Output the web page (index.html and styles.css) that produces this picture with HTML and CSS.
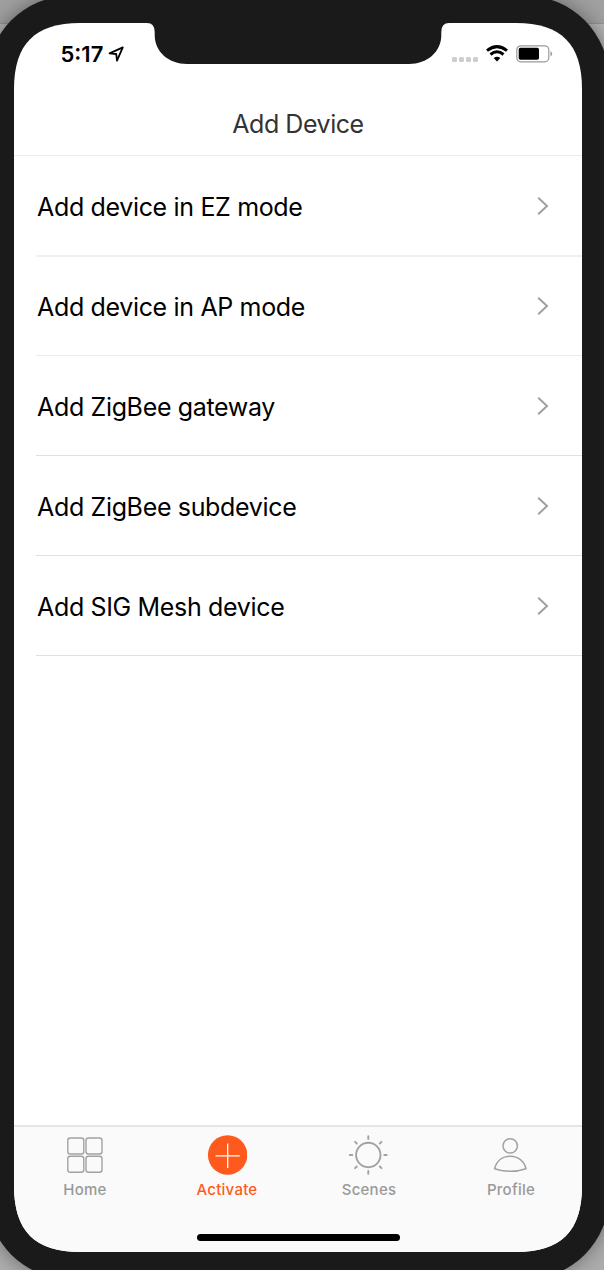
FILE: index.html
```html
<!DOCTYPE html>
<html lang="en">
<head>
<meta charset="utf-8">
<title>Add Device</title>
<link rel="stylesheet" href="styles.css">
</head>
<body>
<div class="desktop">
  <div class="device"></div>
  <main class="screen">
    <div class="status">
      <div class="clock"><span>5:17</span>
        <svg width="17" height="16" viewBox="0 0 17 16"><path d="M1.6 7.4 14.8 1.4 9 14.6 8.2 8Z" fill="none" stroke="#000" stroke-width="1.8" stroke-linejoin="round"/></svg>
      </div>
      <div class="indicators">
        <span class="signal"><i></i><i></i><i></i><i></i></span>
        <svg class="wifi" width="22" height="17" viewBox="0 0 22 17"><g fill="none" stroke="#000" stroke-width="3"><path d="M1 5.6Q11-2.3 21 5.6"/><path d="M4.5 9.5Q11 4.1 17.5 9.5"/></g><path d="M7.7 13Q11 10.3 14.3 13L11 16.5Z"/></svg>
        <svg class="battery" width="37" height="18" viewBox="0 0 37 18"><rect x=".8" y=".8" width="32" height="16" rx="4" fill="#fff" stroke="#999" stroke-width="1.2"/><rect x="2.7" y="2.8" width="20.3" height="12" rx="1.8"/><path d="M34.5 6Q38 8.8 34.5 11.6Z" fill="#999"/></svg>
      </div>
    </div>
    <header class="title">Add Device</header>
    <ul class="list">
      <li class="soft"><span>Add device in EZ mode</span><svg class="chevron" viewBox="0 0 12 20"><path d="M1.2 1.8 10 10 1.2 18.2"/></svg></li>
      <li class="faint"><span>Add device in AP mode</span><svg class="chevron" viewBox="0 0 12 20"><path d="M1.2 1.8 10 10 1.2 18.2"/></svg></li>
      <li><span>Add ZigBee gateway</span><svg class="chevron" viewBox="0 0 12 20"><path d="M1.2 1.8 10 10 1.2 18.2"/></svg></li>
      <li><span>Add ZigBee subdevice</span><svg class="chevron" viewBox="0 0 12 20"><path d="M1.2 1.8 10 10 1.2 18.2"/></svg></li>
      <li><span>Add SIG Mesh device</span><svg class="chevron" viewBox="0 0 12 20"><path d="M1.2 1.8 10 10 1.2 18.2"/></svg></li>
    </ul>
    <footer class="dock">
      <nav class="tabs">
        <a class="tab"><svg viewBox="0 0 40 40"><g fill="none" stroke="#a2a2a2" stroke-width="1.4"><rect x="2.8" y="3" width="16" height="16" rx="2.5"/><rect x="21" y="3" width="16" height="16" rx="2.5"/><rect x="2.8" y="21.2" width="16" height="16" rx="2.5"/><rect x="21" y="21.2" width="16" height="16" rx="2.5"/></g></svg><span>Home</span></a>
        <a class="tab active"><svg viewBox="0 0 40 40"><circle cx="20.6" cy="20" r="19.7" fill="#ff5a1e"/><path d="M8.6 20.8H32.8M20.7 8.5V33" stroke="#fff" stroke-width="1.3"/></svg><span>Activate</span></a>
        <a class="tab"><svg viewBox="0 0 40 40"><g fill="none" stroke="#a2a2a2" stroke-width="1.9" stroke-linecap="round"><circle cx="19.3" cy="20" r="12.2"/><path d="M19.3 1.3V4M19.3 36V38.7M.9 20H3.3M35.3 20H37.7M6.1 6.8 7.8 8.5M30.8 31.5 32.5 33.2M6.1 33.2 7.8 31.5M30.8 8.5 32.5 6.8"/></g></svg><span>Scenes</span></a>
        <a class="tab"><svg viewBox="0 0 40 40"><g fill="none" stroke="#a2a2a2" stroke-width="1.5" stroke-linejoin="round"><circle cx="19.2" cy="10.9" r="7.2"/><path d="M3.6 33.7C5.5 26.2 11.2 21.2 19.2 21.2S33.2 26.2 35 33.7Q19.2 39 3.6 33.7Z"/></g></svg><span>Profile</span></a>
      </nav>
      <div class="home-bar"></div>
    </footer>
  </main>
  <svg class="notch" width="302" height="43" viewBox="0 0 302 43"><path d="M0 0V1Q7.7 1 7.7 10V13C7.7 30 22 42 40 42H262C280 42 294.3 30 294.3 13V10Q294.3 1 302 1V0Z" fill="#1a1a1a"/></svg>
</div>
</body>
</html>
```
FILE: styles.css
```css
* { box-sizing: border-box; }
body { margin: 0; font-family: Inter, "Liberation Sans", sans-serif; }
svg { display: block; flex: none; }
.desktop {
  position: relative;
  width: 604px;
  height: 1270px;
  padding: 23px 22px 18px 14px;
  overflow: hidden;
  background: linear-gradient(#a0a0a0 0 23px, #929292 23px 24px, #b4b4b4 24px 80px, #adadad 80px);
}
.device {
  position: absolute;
  left: -13px;
  top: -4px;
  width: 622px;
  height: 1283px;
  border-radius: 83px;
  background: #1a1a1a;
  box-shadow: 0 0 20px rgba(0, 0, 0, .4);
}
.screen {
  position: relative;
  display: flex;
  flex-direction: column;
  height: 1229px;
  background: #fff;
  clip-path: path("M0 66C0 21 21 0 66 0H502C547 0 568 21 568 66V1163C568 1208 547 1229 502 1229H66C21 1229 0 1208 0 1163Z");
}
.notch { position: absolute; left: 147px; top: 22px; }
.status {
  display: flex;
  justify-content: space-between;
  height: 68px;
  padding: 17px 29px 0 46.5px;
}
.clock {
  display: flex;
  gap: 5px;
  height: 28px;
  align-items: center;
  font-size: 22px;
  font-weight: 600;
}
.clock svg { margin-top: -1px; }
.indicators { display: flex; align-items: flex-start; padding-top: 5px; }
.signal { display: flex; gap: 2px; margin: 12px 8px 0 0; }
.signal i { width: 5px; height: 5px; border-radius: 1.5px; background: #cecece; }
.wifi { margin-right: 8px; }
.title {
  height: 65px;
  border-bottom: 1px solid #ebebeb;
  line-height: 66px;
  text-align: center;
  font-size: 25px;
  letter-spacing: -.45px;
  color: #333;
}
.list { flex: 1; margin: 0; padding: 0 0 0 22px; list-style: none; }
.list li {
  display: flex;
  align-items: center;
  justify-content: space-between;
  height: 100px;
  padding: 1px 33px 0 1px;
  border-bottom: 1px solid #e0e0e0;
  font-size: 25px;
  letter-spacing: -.34px;
  color: #000;
}
.list li span { padding-top: 2px; }
.list .soft { height: 101px; border-bottom: 2px solid #f0f0f0; }
.list .faint { height: 99px; padding-top: 0; border-color: #ececec; }
.chevron { width: 12px; height: 20px; fill: none; stroke: #a0a0a0; stroke-width: 2; }
.dock { height: 127px; border-top: 2px solid #e5e5e5; background: #fafafa; }
.tabs { display: flex; height: 107px; }
.tab {
  display: flex;
  flex: 1;
  flex-direction: column;
  align-items: center;
  padding-top: 8px;
  font-size: 15px;
  font-weight: 500;
  color: #999;
}
.tab svg { width: 40px; height: 40px; }
.tab span { margin-top: 5px; line-height: 20px; letter-spacing: .25px; }
.tab.active { color: #ff5a1e; }
.home-bar { width: 203px; height: 7px; margin: 0 auto; border-radius: 4px; background: #000; }
```
